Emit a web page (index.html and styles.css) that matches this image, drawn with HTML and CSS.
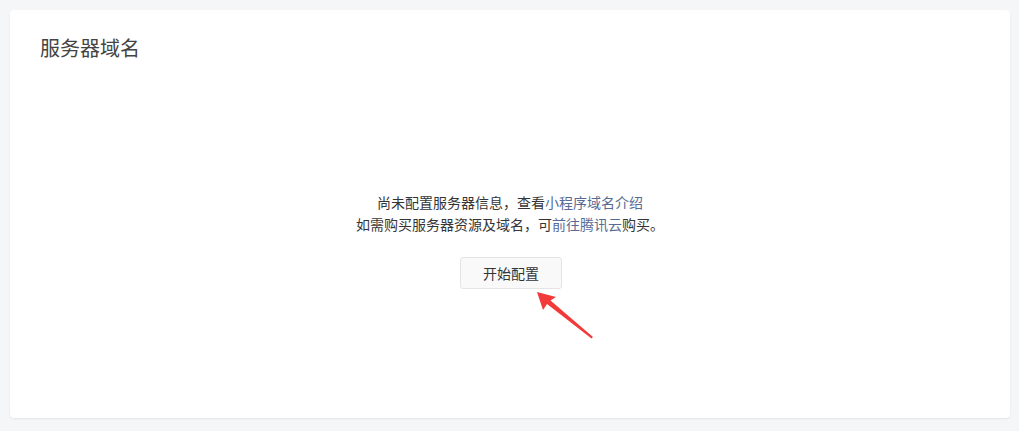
FILE: index.html
```html
<!DOCTYPE html>
<html lang="zh-CN">
<head>
<meta charset="UTF-8">
<title>服务器域名</title>
<link rel="stylesheet" href="styles.css">
</head>
<body>
<div class="card">
    <h2 class="card-title">服务器域名</h2>
    <div class="empty">
        <p>尚未配置服务器信息，查看<a href="#">小程序域名介绍</a></p>
        <p>如需购买服务器资源及域名，可<a href="#">前往腾讯云</a>购买。</p>
        <div class="action">
            <button class="start-button">开始配置</button>
            <svg class="arrow" width="70" height="60" viewBox="0 0 70 60">
                <path d="M2 2 L21 7 L15.5 10.5 L58 47 L56.5 48.5 L12 14 L8 20 Z" fill="#f23a3a"/>
            </svg>
        </div>
    </div>
</div>
</body>
</html>
```
FILE: styles.css
```css
* {
    font-family: "Microsoft YaHei", "Noto Sans CJK SC", sans-serif;
}
body {
    margin: 0;
    background-color: #f5f6f8;
    padding: 10px 9px 13px 10px;
}
.card {
    background-color: #fff;
    border-radius: 4px;
    box-shadow: 0 1px 2px rgba(0, 0, 0, 0.08);
    height: 408px;
    box-sizing: border-box;
    padding: 24px 30px;
}
.card-title {
    margin: 0;
    font-size: 20px;
    font-weight: normal;
    color: #444;
    line-height: 28px;
}
.empty {
    margin-top: 129px;
    text-align: center;
    font-size: 14px;
    color: #353535;
}
.empty p {
    margin: 0;
    line-height: 22px;
}
.empty a {
    color: #576b95;
    text-decoration: none;
}
.action {
    position: relative;
    margin-top: 22px;
}
.start-button {
    display: block;
    margin: 0 auto;
    position: relative;
    left: 1px;
    background-color: #f9f9f9;
    border: 1px solid #e4e4e4;
    border-radius: 3px;
    color: #353535;
    font-size: 14px;
    width: 102px;
    height: 32px;
}
.arrow {
    position: absolute;
    left: 495px;
    top: 33px;
}
```
